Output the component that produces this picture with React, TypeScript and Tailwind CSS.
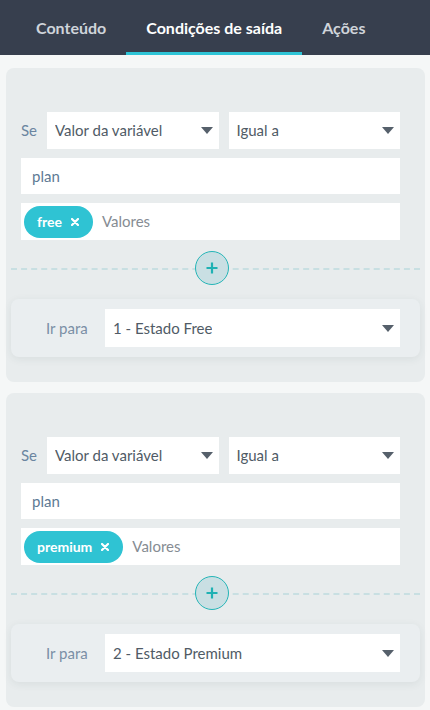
import { Fragment } from "react";

type Condition = {
  value: string;
  target: string;
};

const conditions: Condition[] = [
  { value: "free", target: "1 - Estado Free" },
  { value: "premium", target: "2 - Estado Premium" },
];

function Caret() {
  return (
    <svg width="12" height="7" viewBox="0 0 12 7" className="shrink-0">
      <path d="M0 0h12L6 7z" fill="#56606b" />
    </svg>
  );
}

function SelectBox({ label, className = "" }: { label: string; className?: string }) {
  return (
    <div className={`flex h-[37px] items-center justify-between bg-white pl-2 pr-[6px] ${className}`}>
      <span className="truncate text-[15px] text-[#505b66]">{label}</span>
      <Caret />
    </div>
  );
}

function ConditionCard({ c }: { c: Condition }) {
  return (
    <div className="rounded-lg bg-[#e8eced] pt-[44px] pb-[25px]">
      <div className="space-y-[9px] pl-[15px] pr-[25px]">
        <div className="flex items-center">
          <span className="w-[26px] text-[15px] text-[#6a85a0]">Se</span>
          <div className="flex flex-1 gap-[10px]">
            <SelectBox label="Valor da variável" className="flex-1" />
            <SelectBox label="Igual a" className="flex-1" />
          </div>
        </div>
        <div className="flex h-[36px] items-center bg-white px-[11px] text-[15px] text-[#5d7a94]">plan</div>
        <div className="flex h-[37px] items-center gap-[9px] bg-white pl-[3px]">
          <span className="flex h-[32px] items-center gap-[9px] rounded-full bg-[#2fc3d3] pl-[13px] pr-[14px] text-[14px] font-bold text-white">
            {c.value}
            <svg width="8" height="8" viewBox="0 0 8 8">
              <path d="M1 1l6 6M7 1L1 7" stroke="white" strokeWidth="2.2" strokeLinecap="round" />
            </svg>
          </span>
          <span className="text-[15px] text-[#868c93]">Valores</span>
        </div>
      </div>

      <div className="px-[5px]">
        <div className="relative mt-[11px] flex h-[34px] items-center justify-center pr-[8px]">
          <div className="absolute inset-x-0 top-1/2 border-t-2 border-dashed border-[#c8dfe2]" />
          <button className="relative flex h-[34px] w-[34px] items-center justify-center rounded-full border-[1.5px] border-[#25b5b7] bg-[#c9dfe3]">
            <svg width="12" height="12" viewBox="0 0 12 12">
              <path d="M6 0.5v11M0.5 6h11" stroke="#1fb1b3" strokeWidth="2.2" />
            </svg>
          </button>
        </div>

        <div className="mt-[14px] flex items-center rounded-lg bg-[#eaeef0] py-[10px] pl-[35px] pr-[20px] shadow-[0_2px_8px_rgba(40,60,70,0.08)]">
          <span className="w-[59px] shrink-0 text-[15px] text-[#7a8fa5]">Ir para</span>
          <SelectBox label={c.target} className="h-[38px] flex-1" />
        </div>
      </div>
    </div>
  );
}

export default function App() {
  const tabs = ["Conteúdo", "Condições de saída", "Ações"];
  const active = 1;

  return (
    <div className="min-h-[710px] bg-[#f5f7f7] font-['Lato','Noto_Sans',sans-serif]">
      <div className="flex h-[55px] bg-[#373f4e] pl-4">
        {tabs.map((t, i) => (
          <Fragment key={t}>
            <div
              className={`flex items-center border-b-[3px] px-5 pt-[3px] text-[16px] font-bold ${
                i === active ? "border-[#2ec4d6] text-white" : "border-transparent text-[#cfd4da]"
              }`}
            >
              {t}
            </div>
          </Fragment>
        ))}
      </div>

      <div className="space-y-[11px] px-[6px] pt-[13px] pb-[4px] pr-[5px]">
        {conditions.map((c) => (
          <ConditionCard key={c.value} c={c} />
        ))}
      </div>
    </div>
  );
}
